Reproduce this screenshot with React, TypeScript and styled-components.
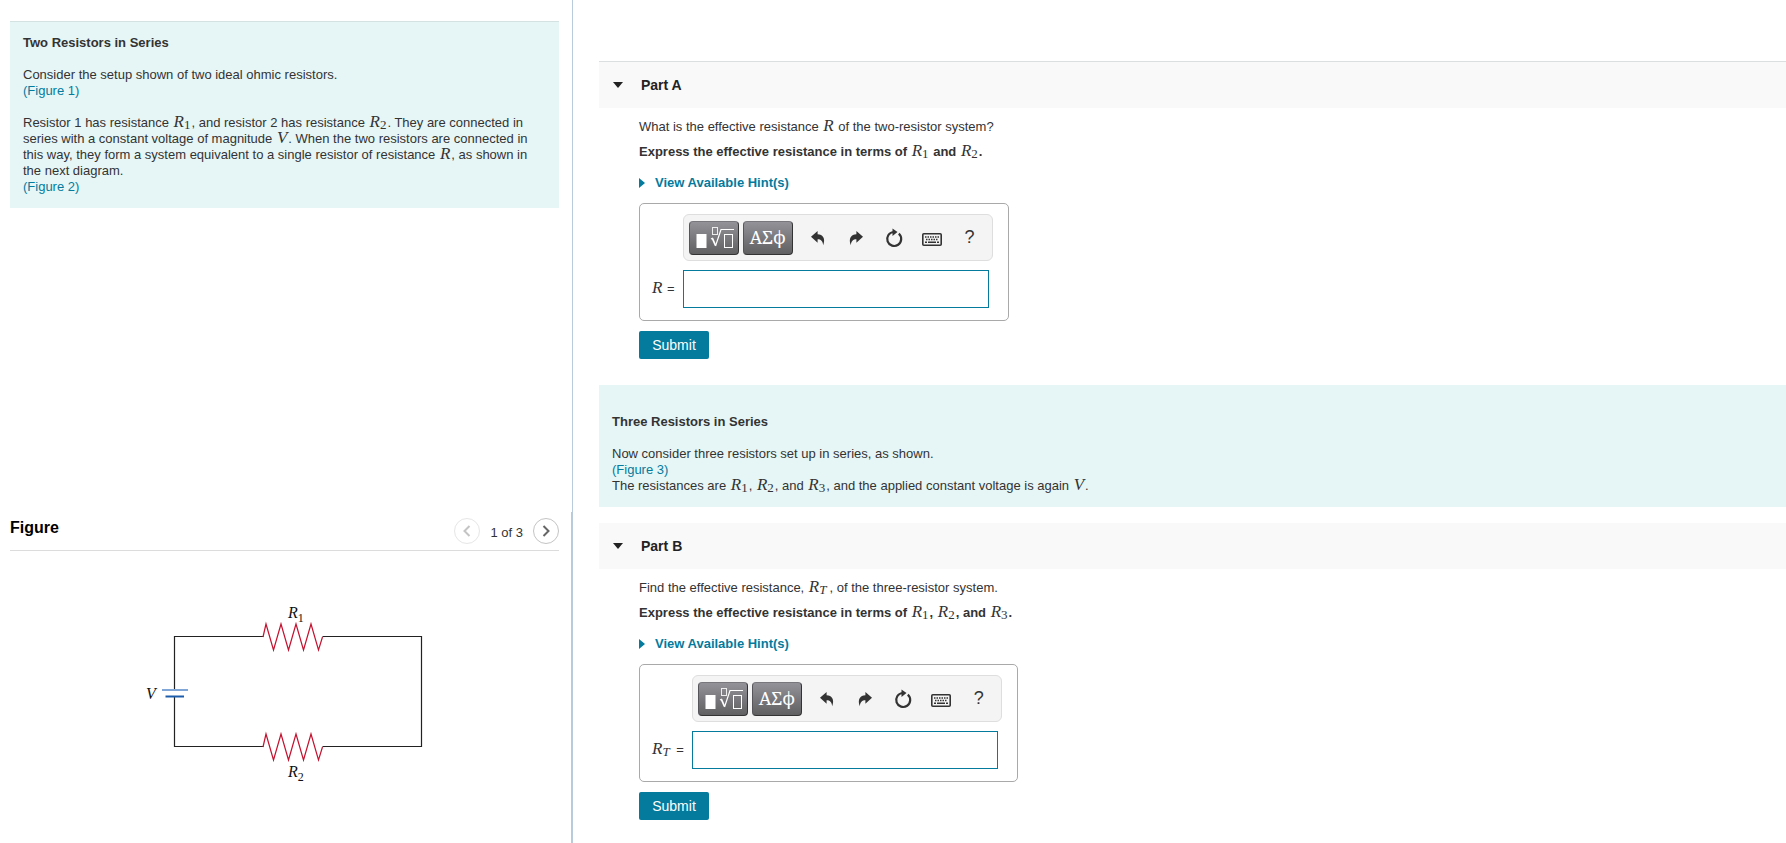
import React from 'react';
import styled, { createGlobalStyle, css } from 'styled-components';

const Global = createGlobalStyle`
  *, *::before, *::after { box-sizing: border-box; }
  body {
    margin: 0;
    background: #fff;
    color: #333;
    font: 13px/16px "Liberation Sans", Arial, sans-serif;
  }
  button, input { font-family: inherit; }
`;

const Page = styled.main`
  display: grid;
  grid-template-columns: minmax(0, 573fr) minmax(0, 1213fr);
  min-height: 100vh;
`;

const LeftColumn = styled.section`
  display: flex;
  flex-direction: column;
`;

const IntroArea = styled.div`
  flex: 1 0 512px;
  padding: 21px 13px 0 10px;
  border-right: 1px solid #b8cbdc;
`;

const FigureArea = styled.div`
  flex: 0 0 331px;
  padding: 0 12px 0 10px;
  border-right: 2px solid #b8cbdc;
`;

const Callout = styled.article<{ $roomy?: boolean }>`
  background: #e6f6f6;
  padding: ${p => (p.$roomy ? 29 : 13)}px 13px 13px;
  ${p => !p.$roomy && css`border-top: 1px solid #d5e2e2;`}
`;

const CalloutTitle = styled.h2`
  margin: 0 0 16px;
  font-size: 13px;
  line-height: 16px;
`;

const Paragraph = styled.p`
  margin: 0;
  & + & { margin-top: 16px; }
`;

const Link = styled.a`
  color: #047a9c;
  text-decoration: none;
`;

const MathText = styled.span`
  font: italic 17px/0 "Liberation Serif", "Times New Roman", serif;
  padding: 0 1px;
`;

const Sub = styled.sub<{ $upright?: boolean }>`
  font-size: 13px;
  line-height: 0;
  vertical-align: -2px;
  font-style: ${p => (p.$upright ? 'normal' : 'italic')};
  padding-right: ${p => (p.$upright ? 0 : 2)}px;
`;

const FigureHeader = styled.header`
  display: flex;
  align-items: center;
  justify-content: space-between;
  height: 39px;
  border-bottom: 1px solid #dcdcdc;
`;

const FigureTitle = styled.h2`
  margin: 0;
  padding-bottom: 7px;
  color: #000;
  font-size: 16px;
  line-height: 18px;
`;

const Pager = styled.nav`
  display: flex;
  align-items: center;
  gap: 10px;
`;

const PageCount = styled.span`
  padding-top: 3px;
`;

const PageButton = styled.button`
  display: grid;
  place-items: center;
  width: 26px;
  height: 26px;
  padding: 0;
  border: 1px solid #c4c4c4;
  border-radius: 50%;
  background: #fff;
  color: #666;
  &:disabled { border-color: #e6e6e6; color: #c4c4c4; }
`;

const Circuit = styled.svg`
  display: block;
  margin: 39px 0 0 120px;
  font: italic 16px "Liberation Serif", "Times New Roman", serif;
`;

const RightColumn = styled.section`
  padding: 61px 0 0 26px;
`;

const PartHeader = styled.header<{ $ruled?: boolean }>`
  display: flex;
  align-items: center;
  gap: 18px;
  height: ${p => (p.$ruled ? 47 : 46)}px;
  padding-left: 14px;
  background: #f9f9f9;
  ${p => p.$ruled && css`border-top: 1px solid #dcdfe0;`}
`;

const PartTitle = styled.h2`
  margin: 0;
  color: #222;
  font-size: 14px;
  line-height: 16px;
`;

const PartBody = styled.form`
  display: flex;
  flex-direction: column;
  align-items: flex-start;
  padding: 11px 16px 0 40px;
`;

const Instruction = styled.p`
  margin: 9px 0 15px;
  font-weight: 700;
`;

const HintButton = styled.button`
  display: flex;
  align-items: center;
  gap: 10px;
  margin-bottom: 12px;
  padding: 0;
  border: 0;
  background: none;
  color: #047a9c;
  font-size: 13px;
  line-height: 16px;
  font-weight: 700;
`;

const AnswerBox = styled.div`
  display: grid;
  grid-template-columns: auto auto;
  align-items: center;
  column-gap: 8px;
  row-gap: 9px;
  padding: 10px 15px 12px 11px;
  border: 1px solid #a9a9a9;
  border-radius: 5px;
`;

const Toolbar = styled.div`
  grid-column: 2;
  display: flex;
  align-items: center;
  gap: 4px;
  width: 310px;
  height: 47px;
  padding-left: 5px;
  border: 1px solid #dedede;
  border-radius: 6px;
  background: #f4f4f4;
`;

const ToolGroup = styled.div`
  display: flex;
  padding-left: 2px;
`;

const PaletteButton = styled.button`
  display: grid;
  place-items: center;
  width: 50px;
  height: 34px;
  padding: 0 0 2px;
  border: 1px solid #333;
  border-top-color: #77777c;
  border-left-color: #55555a;
  border-radius: 4px;
  background: linear-gradient(#929298, #606062);
  color: #fff;
  font: 18px/20px "Noto Serif", "DejaVu Serif", serif;
`;

const ToolButton = styled.button`
  display: grid;
  place-items: center;
  width: 38px;
  height: 34px;
  padding: 0;
  border: 0;
  background: none;
  color: #333;
  font-size: 18px;
`;

const AnswerLabel = styled.label`
  color: #333;
`;

const AnswerInput = styled.input`
  width: 306px;
  height: 38px;
  padding: 0 6px;
  border: 1px solid #047a9c;
  border-radius: 0;
  background: #fff;
  font-size: 16px;
`;

const SubmitButton = styled.button`
  width: 70px;
  height: 28px;
  margin-top: 10px;
  padding: 0;
  border: 0;
  border-radius: 2px;
  background: #047a9c;
  color: #fff;
  font-size: 14px;
`;

const Interlude = styled.div`
  margin: 26px 0 16px;
`;

const R = ({ sub }: { sub?: string }) => (
  <MathText>R{sub && <Sub $upright={sub !== 'T'}>{sub}</Sub>}</MathText>
);

const TemplateIcon = () => (
  <svg width="40" height="26" viewBox="0 0 40 26" fill="none" stroke="#fff">
    <rect x="2.500" y="10" width="10" height="14" fill="#fff" stroke="none" />
    <rect x="18.500" y="3.500" width="5" height="7" opacity="0.85" />
    <path d="M18.500 14.500l3 7" strokeWidth="1.800" />
    <path d="M17 15l2-1M21.500 22L27 5.500H40" strokeWidth="1.200" />
    <rect x="30.500" y="10.500" width="8" height="13" />
  </svg>
);

const UndoIcon = () => (
  <svg width="16" height="16" viewBox="0 0 16 16" fill="currentColor">
    <path d="M1 6.700L7.600 1v3.300C12.800 4.300 15.800 8.500 13.200 15.300C12.700 11.200 11 9.300 7.600 9.300v3.400z" />
  </svg>
);

const RedoIcon = () => (
  <svg width="16" height="16" viewBox="0 0 16 16" fill="currentColor">
    <path d="M15 6.700L8.400 1v3.300C3.200 4.300.2 8.500 2.800 15.300C3.300 11.200 5 9.300 8.400 9.300v3.400z" />
  </svg>
);

const ResetIcon = () => (
  <svg width="18" height="20" viewBox="0 0 18 20" fill="none">
    <path d="M13.800 5.700A7 7 0 1 1 8.500 4" stroke="currentColor" strokeWidth="2.200" />
    <path d="M7.500 0.500L12.500 4L7.500 8z" fill="currentColor" />
  </svg>
);

const KeyboardIcon = () => (
  <svg width="20" height="17" viewBox="0 -4 20 17" fill="none" stroke="currentColor">
    <rect x="0.800" y="0.800" width="18.400" height="11.400" rx="1" strokeWidth="1.600" />
    <path d="M3 4h14M4 6.500h12.500" strokeDasharray="1.500 1" strokeWidth="1.400" />
    <path d="M3 9.300h2M6 9.300h8M15 9.300h2" strokeWidth="1.400" />
  </svg>
);

const Chevron = ({ d }: { d: string }) => (
  <svg width="12" height="14" viewBox="0 0 12 14" fill="none" stroke="currentColor" strokeWidth="2">
    <path d={d} />
  </svg>
);

const ZIGZAG = 'l3 -13l7.500 26l7.500 -26l7.500 26l7.500 -26l7.500 26l7.500 -26l7.500 26l4 -13';

const CircuitDiagram = () => (
  <Circuit width="310" height="200" viewBox="0 0 310 200" role="img" aria-label="Circuit with two resistors in series">
    <g fill="none" stroke="#222" strokeWidth="1.200">
      <path d="M133.500 46.500H44.500V99M44.500 106.500V156.500H133.500" />
      <path d="M192.500 46.500H291.500V156.500H192.500" />
    </g>
    <g fill="none" stroke="#c4122f" strokeWidth="1.200">
      <path d={`M133 47${ZIGZAG}`} />
      <path d={`M133 157${ZIGZAG}`} />
    </g>
    <path d="M32 100H58" stroke="#7fa6d6" strokeWidth="2" />
    <path d="M35.500 106.500H54" stroke="#1d5cab" strokeWidth="2" />
    <g fill="#111">
      <text x="16" y="109">V</text>
      <text x="158" y="28">R<tspan dy="4" fontSize="12" fontStyle="normal">1</tspan></text>
      <text x="158" y="187">R<tspan dy="4" fontSize="12" fontStyle="normal">2</tspan></text>
    </g>
  </Circuit>
);

interface PartProps {
  name: string;
  ruled?: boolean;
  symbol: React.ReactNode;
  question: React.ReactNode;
  instruction: React.ReactNode;
}

const Part = ({ name, ruled, symbol, question, instruction }: PartProps) => {
  const inputId = `answer-${name}`;
  return (
    <section>
      <PartHeader $ruled={ruled}>
        <svg width="10" height="6" viewBox="0 0 10 6" fill="#222"><path d="M0 0h10L5 6z" /></svg>
        <PartTitle>Part {name}</PartTitle>
      </PartHeader>
      <PartBody onSubmit={e => e.preventDefault()}>
        <Paragraph>{question}</Paragraph>
        <Instruction>{instruction}</Instruction>
        <HintButton type="button">
          <svg width="6" height="10" viewBox="0 0 6 10" fill="currentColor"><path d="M0 0v10l6-5z" /></svg>
          View Available Hint(s)
        </HintButton>
        <AnswerBox>
          <Toolbar role="toolbar" aria-label="Equation tools">
            <PaletteButton type="button" aria-label="Templates"><TemplateIcon /></PaletteButton>
            <PaletteButton type="button">ΑΣϕ</PaletteButton>
            <ToolGroup>
              <ToolButton type="button" aria-label="Undo"><UndoIcon /></ToolButton>
              <ToolButton type="button" aria-label="Redo"><RedoIcon /></ToolButton>
              <ToolButton type="button" aria-label="Reset"><ResetIcon /></ToolButton>
              <ToolButton type="button" aria-label="Keyboard shortcuts"><KeyboardIcon /></ToolButton>
              <ToolButton type="button">?</ToolButton>
            </ToolGroup>
          </Toolbar>
          <AnswerLabel htmlFor={inputId}>{symbol} =</AnswerLabel>
          <AnswerInput id={inputId} type="text" />
        </AnswerBox>
        <SubmitButton type="submit">Submit</SubmitButton>
      </PartBody>
    </section>
  );
};

export default function App() {
  return (
    <>
      <Global />
      <Page>
        <LeftColumn>
          <IntroArea>
            <Callout>
              <CalloutTitle>Two Resistors in Series</CalloutTitle>
              <Paragraph>
                Consider the setup shown of two ideal ohmic resistors.<br />
                <Link href="#figure">(Figure 1)</Link>
              </Paragraph>
              <Paragraph>
                Resistor 1 has resistance <R sub="1" />, and resistor 2 has resistance <R sub="2" />. They are
                connected in series with a constant voltage of magnitude <MathText>V</MathText>. When the two
                resistors are connected in this way, they form a system equivalent to a single resistor of
                resistance <R />, as shown in the next diagram.<br />
                <Link href="#figure">(Figure 2)</Link>
              </Paragraph>
            </Callout>
          </IntroArea>
          <FigureArea id="figure">
            <FigureHeader>
              <FigureTitle>Figure</FigureTitle>
              <Pager aria-label="Figures">
                <PageButton disabled aria-label="Previous figure"><Chevron d="M8.500 2L3.500 7l5 5" /></PageButton>
                <PageCount>1 of 3</PageCount>
                <PageButton aria-label="Next figure"><Chevron d="M3.500 2l5 5-5 5" /></PageButton>
              </Pager>
            </FigureHeader>
            <CircuitDiagram />
          </FigureArea>
        </LeftColumn>
        <RightColumn>
          <Part
            name="A"
            ruled
            symbol={<R />}
            question={<>What is the effective resistance <R /> of the two-resistor system?</>}
            instruction={<>Express the effective resistance in terms of <R sub="1" /> and <R sub="2" />.</>}
          />
          <Interlude>
            <Callout $roomy>
              <CalloutTitle>Three Resistors in Series</CalloutTitle>
              <Paragraph>
                Now consider three resistors set up in series, as shown.<br />
                <Link href="#figure">(Figure 3)</Link><br />
                The resistances are <R sub="1" />, <R sub="2" />, and <R sub="3" />, and the applied constant
                voltage is again <MathText>V</MathText>.
              </Paragraph>
            </Callout>
          </Interlude>
          <Part
            name="B"
            symbol={<R sub="T" />}
            question={<>Find the effective resistance, <R sub="T" />, of the three-resistor system.</>}
            instruction={<>Express the effective resistance in terms of <R sub="1" />, <R sub="2" />, and <R sub="3" />.</>}
          />
        </RightColumn>
      </Page>
    </>
  );
}
